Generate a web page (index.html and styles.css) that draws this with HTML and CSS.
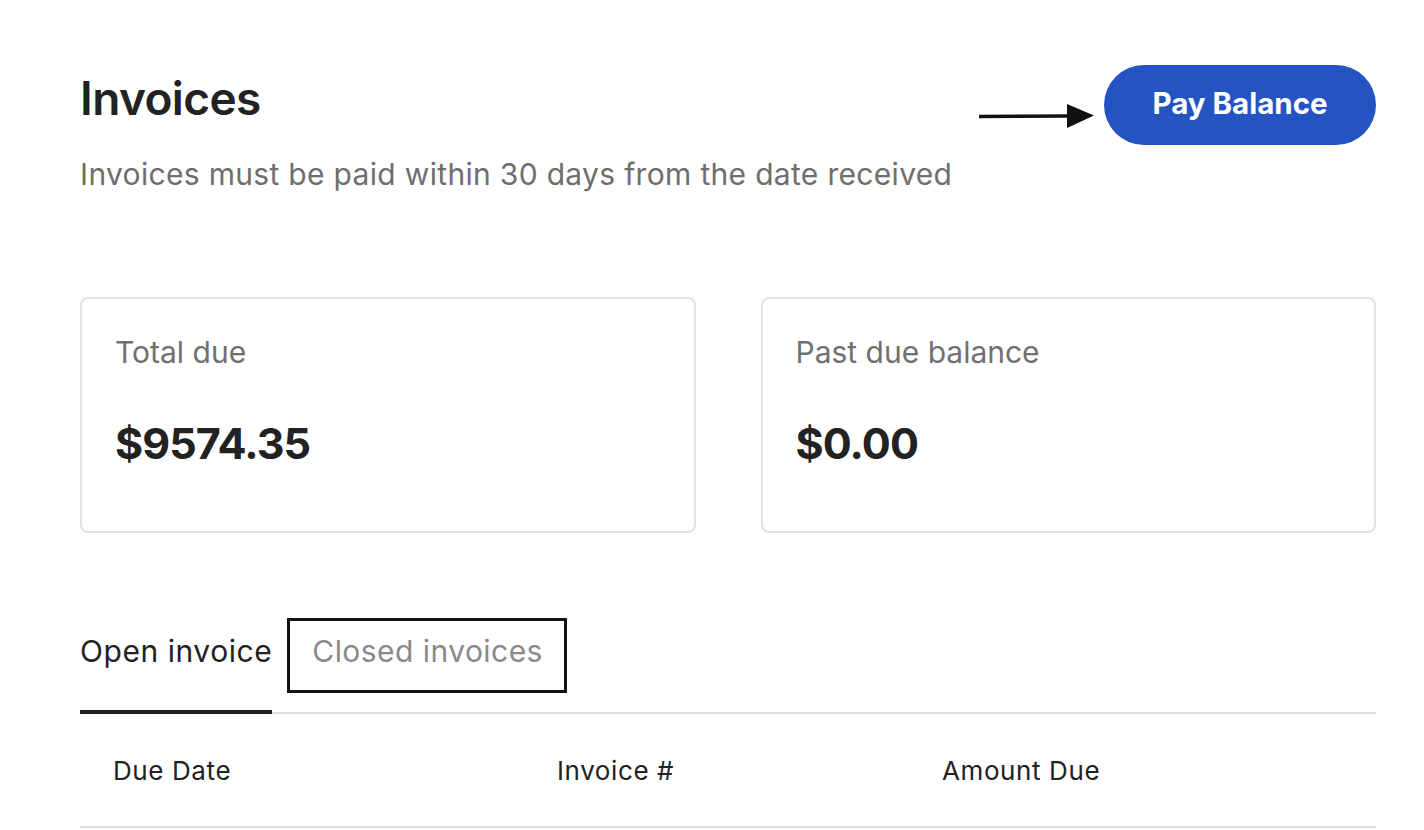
FILE: index.html
```html
<!DOCTYPE html>
<html lang="en">
<head>
<meta charset="utf-8">
<title>Invoices</title>
<link rel="stylesheet" href="styles.css">
</head>
<body>
<main class="page">
  <header class="head">
    <div class="head-text">
      <h1 class="title">Invoices</h1>
      <p class="subtitle">Invoices must be paid within 30 days from the date received</p>
    </div>
    <div class="head-actions">
      <svg class="arrow" width="116" height="26" viewBox="0 0 116 26" aria-hidden="true">
        <line x1="0" y1="13.5" x2="92" y2="13" stroke="#111" stroke-width="3.5"/>
        <polygon points="88,1 115,12.5 88,25" fill="#111"/>
      </svg>
      <button class="pay-btn" type="button">Pay Balance</button>
    </div>
  </header>

  <section class="cards">
    <div class="card">
      <div class="card-label">Total due</div>
      <div class="card-amount">$9574.35</div>
    </div>
    <div class="card">
      <div class="card-label">Past due balance</div>
      <div class="card-amount">$0.00</div>
    </div>
  </section>

  <nav class="tabs">
    <div class="tab tab-active">Open invoice</div>
    <div class="tab tab-closed">Closed invoices</div>
  </nav>

  <div class="table-head">
    <div class="th">Due Date</div>
    <div class="th">Invoice #</div>
    <div class="th">Amount Due</div>
  </div>
</main>
</body>
</html>
```

FILE: styles.css
```css
* { box-sizing: border-box; }

html, body {
  margin: 0;
  padding: 0;
  background: #ffffff;
}

body {
  font-family: Inter, "Liberation Sans", Arial, sans-serif;
  color: #222222;
}

.page {
  width: 1424px;
  padding: 65px 48px 0 80px;
}

.head {
  display: flex;
  justify-content: space-between;
  align-items: flex-start;
}

.title {
  margin: 5px 0 0 0;
  font-size: 46px;
  line-height: 56px;
  font-weight: 600;
  color: #222222;
  letter-spacing: -0.6px;
}

.subtitle {
  margin: 28px 0 0 0;
  font-size: 30px;
  line-height: 40px;
  font-weight: 400;
  color: #6e6e6e;
  letter-spacing: 0.32px;
}

.head-actions {
  display: flex;
  align-items: center;
}

.arrow {
  display: block;
  margin-right: 9px;
  margin-top: 22px;
}

.pay-btn {
  width: 272px;
  height: 80px;
  border: 0;
  border-radius: 40px;
  background: #2454c2;
  color: #ffffff;
  font-family: inherit;
  font-size: 29.5px;
  font-weight: 700;
  padding: 0 0 4px 0;
  cursor: pointer;
}

.cards {
  margin-top: 103px;
  display: grid;
  grid-template-columns: 1fr 1fr;
  column-gap: 65px;
}

.card {
  height: 236px;
  border: 2px solid #e2e2e2;
  border-radius: 8px;
  padding: 33px 33px 0 33px;
}

.card-label {
  font-size: 30px;
  line-height: 40px;
  color: #707070;
  letter-spacing: 0;
}

.card-amount {
  margin-top: 46px;
  font-size: 43px;
  line-height: 50px;
  font-weight: 700;
  color: #222222;
  letter-spacing: -0.9px;
}

.tabs {
  margin-top: 85px;
  display: flex;
  align-items: flex-end;
  border-bottom: 2px solid #dedede;
}

.tab {
  font-size: 30px;
  line-height: 40px;
  letter-spacing: 0.55px;
}

.tab-active {
  padding-bottom: 39px;
  border-bottom: 4px solid #222222;
  margin-bottom: -2px;
  color: #222222;
}

.tab-closed {
  margin-left: 15px;
  margin-bottom: 19px;
  height: 75px;
  border: 3px solid #111111;
  padding: 10px 21px 0 22px;
  color: #8a8a8a;
  letter-spacing: 0.45px;
}

.table-head {
  display: grid;
  grid-template-columns: 444px 385px 1fr;
  height: 114px;
  align-items: center;
  border-bottom: 2px solid #dedede;
}

.th {
  padding-left: 33px;
  font-size: 26px;
  color: #222222;
  letter-spacing: 0.6px;
}
```
